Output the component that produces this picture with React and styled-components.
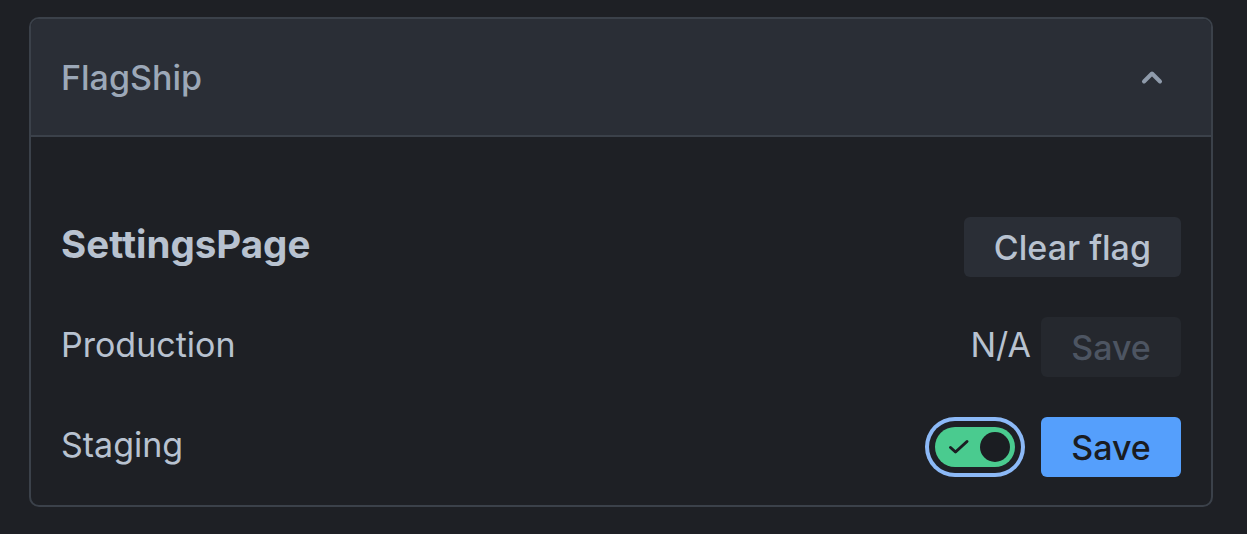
import styled, { createGlobalStyle } from 'styled-components';

const GlobalStyle = createGlobalStyle`
  html, body {
    margin: 0;
    padding: 0;
    background: #1e2025;
  }
  body {
    font-family: Inter, 'Noto Sans', sans-serif;
    -webkit-font-smoothing: antialiased;
  }
`;

function ChevronUp() {
  return (
    <svg width="24" height="16" viewBox="0 0 24 16" fill="none">
      <path
        d="M4 12.5 L12 4.5 L20 12.5"
        stroke="#8f9bab"
        strokeWidth="4"
        strokeLinecap="round"
        strokeLinejoin="round"
      />
    </svg>
  );
}

function Check() {
  return (
    <svg width="22" height="16" viewBox="0 0 22 16" fill="none">
      <path
        d="M2.5 8.5 L7.5 13 L19 2.5"
        stroke="#1b1d22"
        strokeWidth="3"
        strokeLinecap="round"
        strokeLinejoin="round"
      />
    </svg>
  );
}

function App() {
  return (
    <>
      <GlobalStyle />
      <Page>
        <Card>
          <Header>
            <Title>FlagShip</Title>
            <ChevronUp />
          </Header>
          <Body>
            <Row>
              <FlagName>SettingsPage</FlagName>
              <Button>Clear flag</Button>
            </Row>
            <Row>
              <Label>Production</Label>
              <Controls>
                <Label>N/A</Label>
                <Button disabled>Save</Button>
              </Controls>
            </Row>
            <Row>
              <Label>Staging</Label>
              <Controls>
                <Switch>
                  <Check />
                  <Thumb />
                </Switch>
                <Button $primary>Save</Button>
              </Controls>
            </Row>
          </Body>
        </Card>
      </Page>
    </>
  );
}

const Page = styled.div`
  padding: 17px 34px 26px 29px;
`;

const Card = styled.section`
  border: 2px solid #3b414a;
  border-radius: 10px;
  overflow: hidden;
`;

const Header = styled.div`
  display: flex;
  align-items: center;
  justify-content: space-between;
  height: 116px;
  padding: 0 47px 0 30px;
  background: #2a2e36;
  border-bottom: 2px solid #3b414a;
`;

const Title = styled.h2`
  margin: 0;
  font-size: 34px;
  font-weight: 500;
  color: #9ca8b8;
`;

const Body = styled.div`
  display: flex;
  flex-direction: column;
  gap: 40px;
  padding: 80px 30px 28px 30px;
`;

const Row = styled.div`
  display: flex;
  align-items: center;
  justify-content: space-between;
  height: 60px;
`;

const FlagName = styled.h3`
  margin: 0;
  padding-bottom: 6px;
  font-size: 38.5px;
  font-weight: 700;
  color: #b8c2d0;
`;

const Label = styled.span`
  padding-bottom: 6px;
  font-size: 34px;
  color: #b8c2d0;
`;

const Controls = styled.div`
  display: flex;
  align-items: center;
  gap: 10px;
`;

const Button = styled.button`
  height: 60px;
  padding: 0 30px;
  min-width: 140px;
  border: none;
  border-radius: 6px;
  font-family: inherit;
  font-size: 34px;
  font-weight: 500;
  background: ${(p) => (p.$primary ? '#559ffc' : '#2a2e36')};
  color: ${(p) => (p.$primary ? '#1a1c21' : '#b8c2d0')};

  &:disabled {
    background: #25282e;
    color: #4d5562;
  }
`;

const Switch = styled.div`
  display: flex;
  align-items: center;
  justify-content: space-between;
  box-sizing: border-box;
  width: 80px;
  height: 40px;
  padding: 0 5px 0 13px;
  margin-right: 16px;
  border-radius: 20px;
  background: #4acb8f;
  box-shadow: 0 0 0 6px #1e2025, 0 0 0 10px #8cb9f7;
`;

const Thumb = styled.span`
  width: 30px;
  height: 30px;
  border-radius: 50%;
  background: #1b1d22;
`;

export default App;
